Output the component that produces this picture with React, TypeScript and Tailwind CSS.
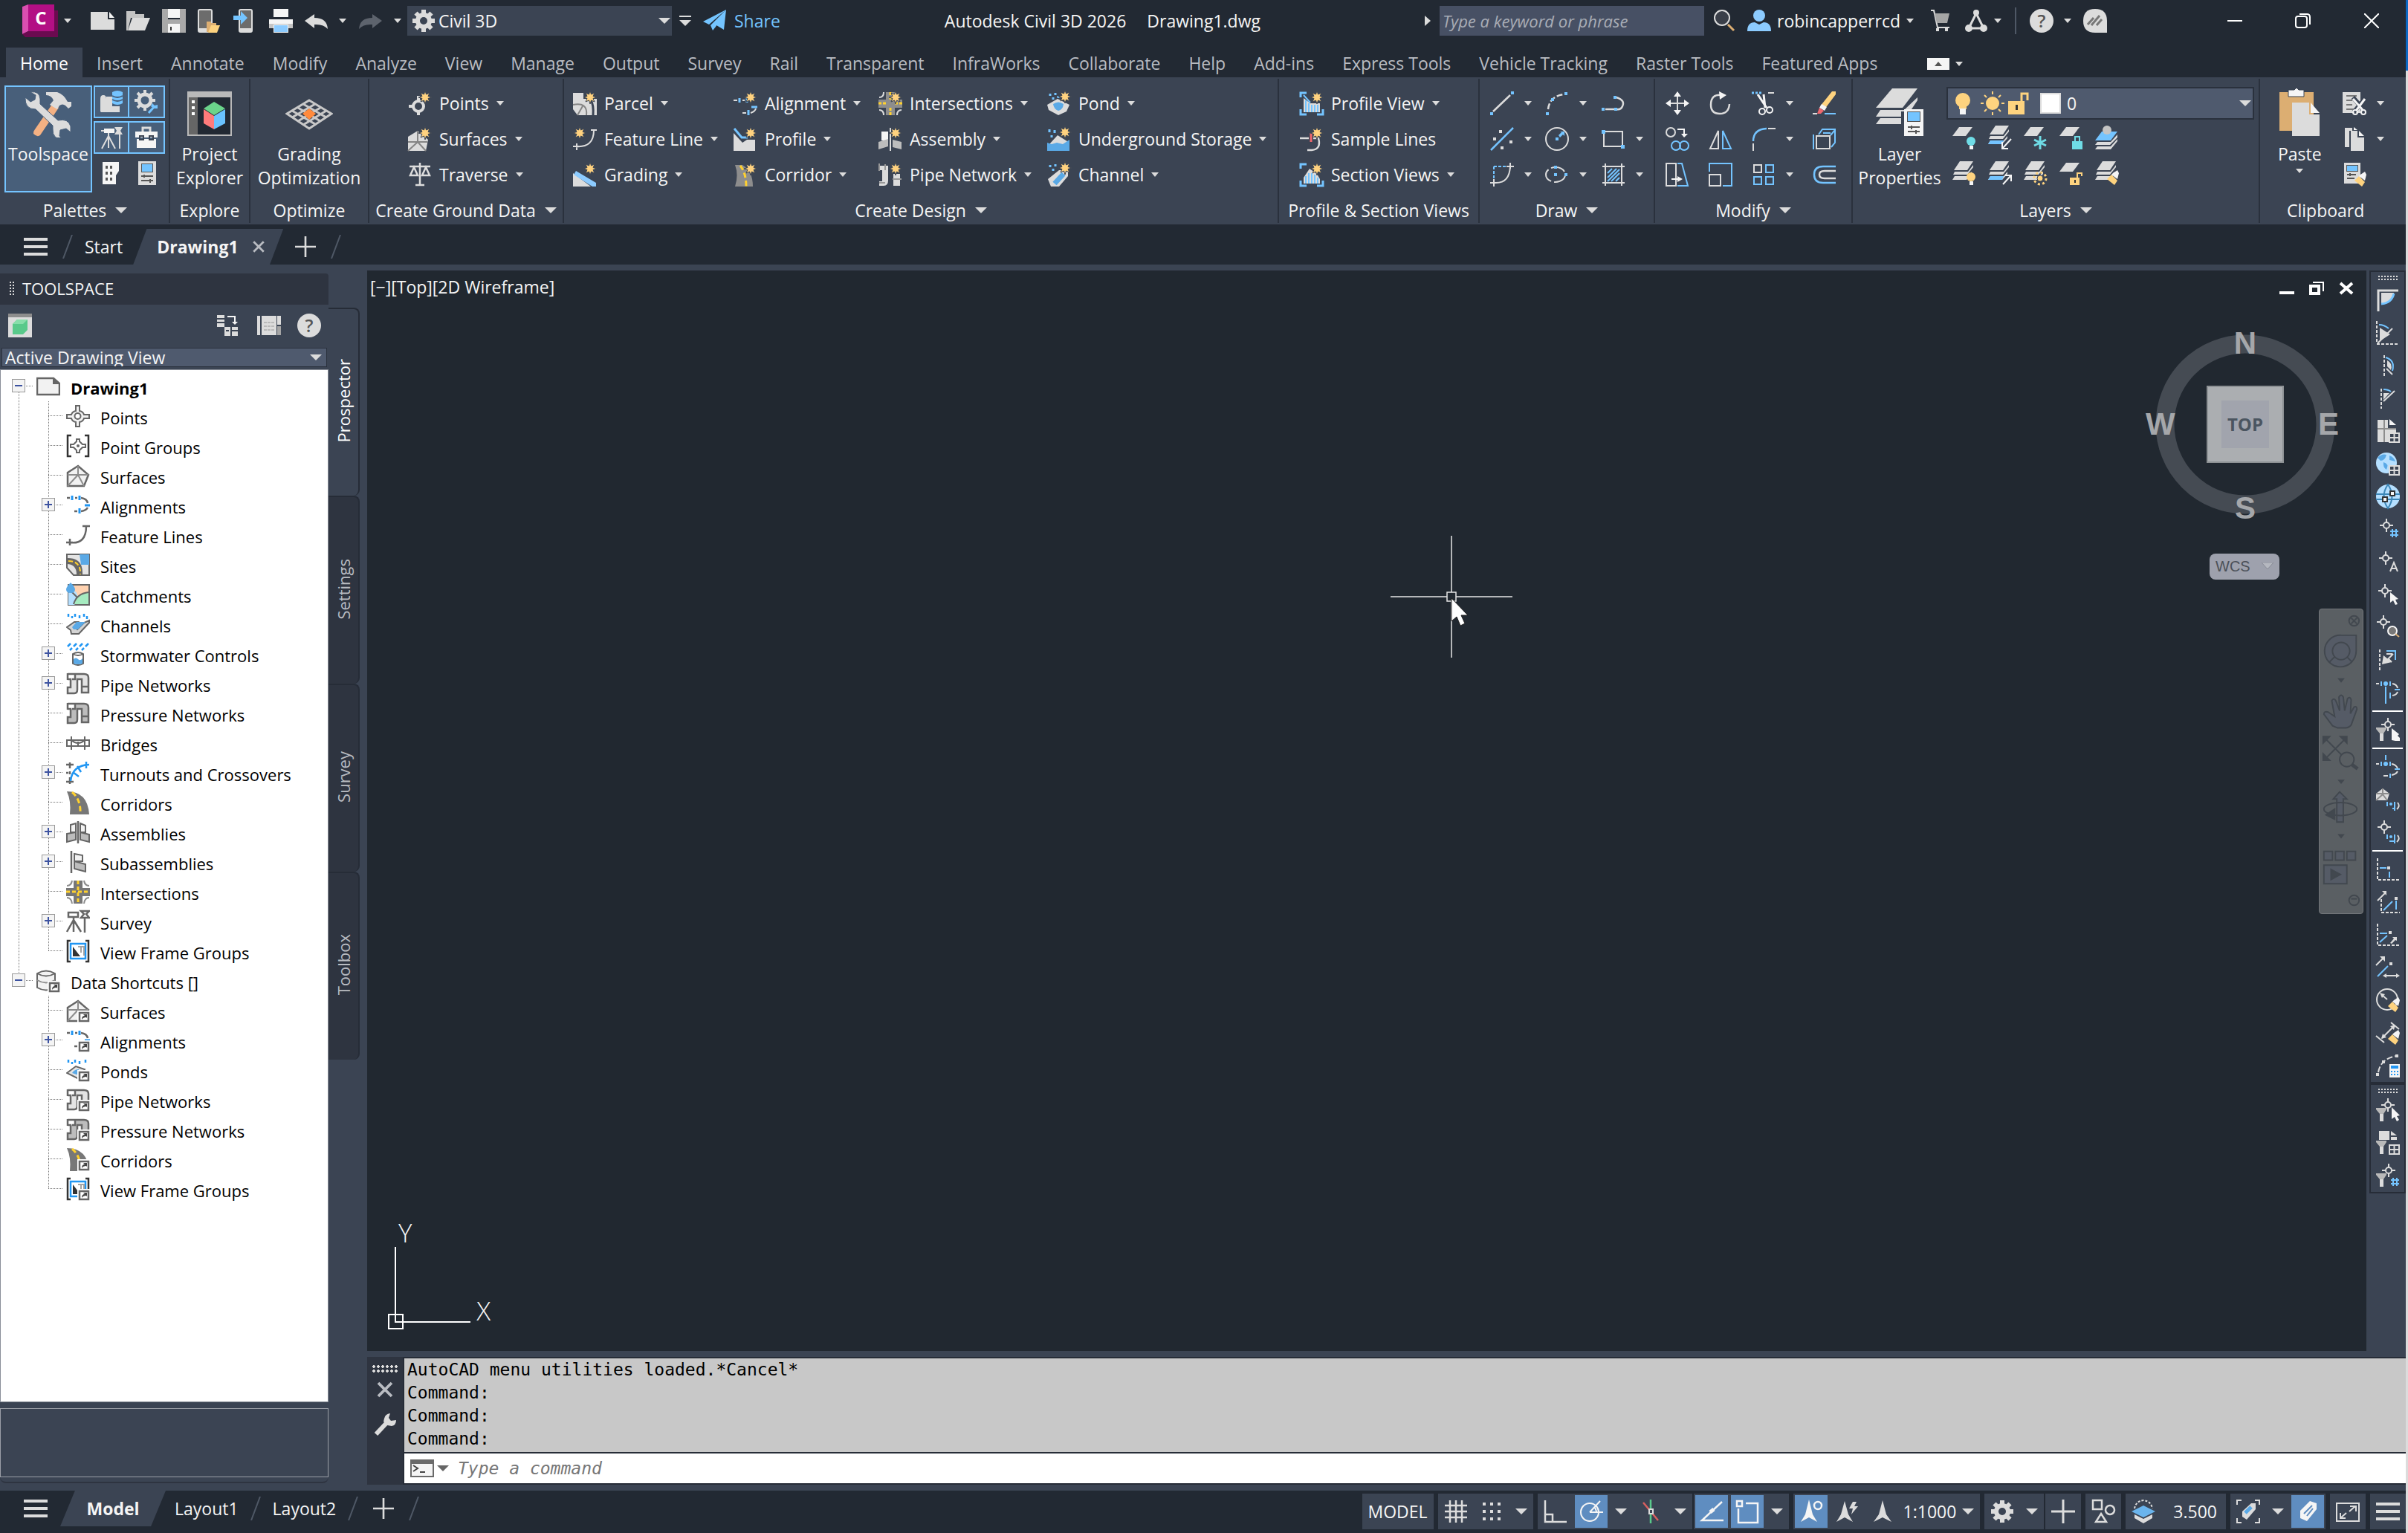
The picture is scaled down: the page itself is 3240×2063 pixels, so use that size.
import { ReactNode } from "react";
import clsx from "clsx";

const G = "#dcdcdc";
const W = "#f5f5f5";
const B = "#74c4ff";
const Y = "#fed37f";
const K = "#666666";
const BG = "#3b4453";

interface ShapeProps {
  d: string;
  c?: string;
  w?: number;
  f?: string;
  dash?: string;
}

const L = ({ d, c = G, w = 2, f = "none", dash }: ShapeProps) => (
  <path d={d} stroke={c} strokeWidth={w} fill={f} strokeDasharray={dash} />
);

const F = ({ d, c = G }: ShapeProps) => <path d={d} fill={c} />;

const Star = ({ x = 23, y = 8 }: { x?: number; y?: number }) => (
  <path
    transform={`translate(${x} ${y})`}
    d="M0-9 1.5-4 6-6 4-1.5 9 0 4 1.5 6 6 1.5 4 0 9-1.5 4-6 6-4 1.5-9 0-4-1.5-6-6-1.5-4z"
    fill="#ffd27f"
    stroke={BG}
    strokeWidth={1}
  />
);

const Sheets = ({ mid = G }: { mid?: string }) => (
  <>
    <F d="M10 0h18l-8 12H2z" />
    <F d="M3 14h18l7-9v3l-8 10H1z" c={mid} />
    <F d="M3 20h18l5-6v3l-7 8H0z" c={mid} />
  </>
);

const Target = ({ x, y, c = G }: { x: number; y: number; c?: string }) => (
  <g transform={`translate(${x} ${y})`}>
    <circle r={4} fill="none" stroke={c} strokeWidth={2} />
    <L d="M-9 0h5M4 0h5M0-9v5M0 4v5" c={c} />
  </g>
);

const Funnel = () => (
  <>
    <F d="M0 13h14v2l-4 6v10H5V21L0 15z" c="#b9b9b9" />
    <F d="M5 21h5v10H5z" />
  </>
);

const GridBadge = () => <L d="M18 19h13v12H18zM24.5 19v12M18 25h13" f={BG} />;

const Brush = () => (
  <>
    <F d="M22 18l8 8-4 6-10-8z" c={Y} />
    <F d="M24 16l6-4 2 4-2 8-8-6z" c={W} />
  </>
);

const Pipes = ({ c = "#e4e4e4" }: { c?: string }) => (
  <L
    d="M2 3h10M2 10h4v11H2v8h9q4 0 4-5V10h6v18h9V8q0-5-6-5H12v7H8M2 2v9M21 20h9"
    c={K}
    w={2.5}
    f={c}
  />
);

const Shortcut = () => (
  <>
    <rect x={15} y={16} width={17} height={16} fill="#fff" />
    <L d="M18 19h12v11H18z" c={K} w={2.5} f="#fff" />
    <F d="M21 28q0-5 4-5l-2-2h5v5l-1-1q-4 0-6 3z" c="#444" />
  </>
);

const ICONS: Record<string, ReactNode> = {
  new: (
    <>
      <F d="M0 4h23v10h9v14H0z" />
      <F d="M25 4l7 8h-7z" c={W} />
    </>
  ),
  open: (
    <>
      <F d="M0 3h12v4h12v5H6L2 29H0z" c="#c4c4c4" />
      <F d="M8 12h24l-7 17H2z" c={G} />
    </>
  ),
  save: (
    <>
      <F d="M0 0h8v14h16V0h8v32H0z" c="#a9a9a9" />
      <F d="M8 0h16v12H8zM8 20h16v12H8z" c={W} />
      <F d="M11 24h2v5h-2z" c="#333" />
    </>
  ),
  phoneOpen: (
    <>
      <rect x={1} y={1} width={18} height={30} rx={2} fill="#6c6c6c" stroke={G} strokeWidth={2} />
      <F d="M1 26h18v5H1z" />
      <F d="M12 17h6v2h7v12H12z" c="#dcae72" />
      <F d="M18 22h12l-4 10H14z" c={Y} />
    </>
  ),
  phoneSave: (
    <>
      <rect x={8} y={1} width={17} height={30} rx={2} fill="#6c6c6c" stroke={G} strokeWidth={2} />
      <F d="M8 26h17v5H8z" />
      <F d="M0 9h10V3l9 9-9 9v-6H0z" c={B} />
    </>
  ),
  print: (
    <>
      <F d="M6 0h20v11H6zM0 14h32v12H0z" c={W} />
      <F d="M0 20h32v6H0z" c="#c4c4c4" />
      <F d="M6 21h20v11H6z" c={W} />
      <F d="M7 22h18v9H7z" c="#8ccbff" />
    </>
  ),
  undo: <F d="M0 16 13 7v5q17 0 18 15-6-7-18-6v5z" />,
  redo: <F d="M32 16 19 7v5Q2 12 1 27q6-7 18-6v5z" c="#5d636d" />,
  gear: (
    <>
      <circle cx={16} cy={16} r={8} fill="none" stroke={G} strokeWidth={6} />
      <L d="M16 1v5M16 26v5M1 16h5M26 16h5M5.5 5.5l3.5 3.5M23 23l3.5 3.5M5.5 26.5 9 23M23 9l3.5-3.5" w={6} />
    </>
  ),
  share: <F d="M31 1 0 17l8 4zM31 1 10 22l3 7 4-5zM31 1 18 22l10 6z" c={B} />,
  search: (
    <>
      <circle cx={12} cy={12} r={10} fill="#3a3f49" stroke={G} strokeWidth={2} />
      <L d="M20 21l8 8" c="#dcae72" w={3} />
    </>
  ),
  person: (
    <>
      <circle cx={16} cy={9} r={8} fill="#8ccbff" />
      <F d="M0 30q0-12 10-12l6 3 6-3q10 0 10 12z" c="#8ccbff" />
    </>
  ),
  cart: (
    <>
      <L d="M3 2h4l5 23h16" />
      <F d="M8 6h20l-3 13H11z" c="#a5a5a5" />
      <F d="M10 26h4v4h-4zM22 26h4v4h-4z" />
    </>
  ),
  autodesk: (
    <>
      <L d="M16 6 6 26h20z" w={3} />
      <circle cx={16} cy={5} r={4} fill={G} />
      <circle cx={6} cy={26} r={5} fill={G} />
      <circle cx={26} cy={26} r={5} fill={G} />
    </>
  ),
  speak: (
    <>
      <F d="M16 0q16 0 16 16v16H16Q0 32 0 16T16 0z" />
      <L d="M6 21l8-9M11 22l11-13M18 22l7-8" c="#777" w={3} />
    </>
  ),
  files: (
    <>
      <F d="M1 29V12q0-5 4-5t4 5v10h18v8H2z" />
      <F d="M9 9h8v14H9z" c={G} />
      <F d="M17 3q7-4 14 0v15q-7 4-14 0z" c={B} />
      <L d="M17 8q7 4 14 0M17 13q7 4 14 0" c="#485f7a" />
    </>
  ),
  gearWrench: (
    <>
      <circle cx={14} cy={14} r={8} fill="none" stroke={G} strokeWidth={5} />
      <L d="M14 0v5M14 23v5M0 14h5M23 14h5M4 4l4 4M20 8l4-4M4 24l4-4" w={4} />
      <L d="M19 31l8-9" c={B} w={3} />
      <F d="M24 18l3 3 4-1v5h-5l-4-3z" c={B} />
    </>
  ),
  survey: (
    <>
      <F d="M6 4h14v6H6z" c={W} />
      <L d="M2 7h4M12 10v20M12 14 3 31M12 14l9 17M27 12v19" />
      <F d="M20 2h11l-3 5 3 5H20l3-5z" />
    </>
  ),
  toolbox: (
    <>
      <L d="M11 8V3h10v5" w={3} />
      <F d="M1 8h30v8H1zM3 18h26v12H3z" c={W} />
      <L d="M7 14h5v5H7zM20 14h5v5h-5z" c={BG} />
    </>
  ),
  panelDots: (
    <>
      <F d="M4 1h22v12l-4 6v12H4z" c={W} />
      <L d="M8 8h3M8 16h3M8 24h3M14 8h3M14 16h3M14 24h3" c="#555" w={4} />
    </>
  ),
  tablet: (
    <>
      <F d="M4 0h24v32H4z" />
      <F d="M8 3h16v12H8z" c="#555" />
      <F d="M9 4h14v10H9z" c={B} />
      <L d="M8 20h16M8 26h16M12 18v4M20 24v5" c="#555" />
    </>
  ),
  points: (
    <>
      <circle cx={14} cy={20} r={7} fill="none" stroke={G} strokeWidth={4} />
      <L d="M14 6v7M14 27v5M1 20h6" w={4} />
      <Star />
    </>
  ),
  surfaces: (
    <>
      <F d="M0 13 13 5l14 12-3 15H0z" />
      <L d="M13 5v15L0 32M0 20h26M13 20l11 12" c="#858585" />
      <Star />
    </>
  ),
  traverse: <L d="M16 0v30M2 5h28M8 6 3 17h10zM24 6l-5 11h10zM10 30h12" w={2.5} />,
  parcel: (
    <>
      <F d="M0 2h14v8h18v22H6L0 24z" />
      <L d="M0 18q20-4 18 14M6 32l8-14" c="#858585" />
      <L d="M24 12q4 6 3 20" c={BG} w={3} />
      <Star />
    </>
  ),
  featureLine: (
    <>
      <L d="M4 26q24 2 24-22M0 26h8M5 22v9M24 4h8" />
      <Star x={9} y={8} />
    </>
  ),
  grading: (
    <>
      <F d="M0 14v18h24z" />
      <F d="M4 11 31 27v5h-5L1 16z" c="#8ccbff" />
      <Star />
    </>
  ),
  alignment: (
    <>
      <L d="M0 12h5M12 12h3M20 12h4M12 29h5M23 29q6-2 7-6" />
      <L d="M8 9v6M18 9v6M20 25v7M24 21h8" c={B} w={3} />
      <Star />
    </>
  ),
  profile: (
    <>
      <L d="M1 2l10 12h8" c={B} w={3} />
      <F d="M0 8l12 13 6-4h11v15H0z" />
      <Star />
    </>
  ),
  corridor: (
    <>
      <F d="M2 3h10q14 8 14 29H2Q7 16 2 3z" c="#8d8d8d" />
      <L d="M9 4q8 10 8 28" c="#ffd12f" w={3} dash="7 4" />
      <Star />
    </>
  ),
  intersections: (
    <>
      <F d="M10 1h12v10h10v11H22v10H10V22H0V11h10z" c="#8d8d8d" />
      <L d="M16 1v10M16 22v10M0 16h10M22 16h10" c="#ffd12f" w={3} dash="4 2" />
      <L d="M1 8q6 0 6-7M1 25q6 0 6 7M31 25q-6 0-6 7" />
      <Star />
    </>
  ),
  assembly: (
    <>
      <F d="M4 6h9v12H4z" c={W} />
      <F d="M0 20l13-4v10L0 30zM19 17l12 3v10l-12-3z" c="#bdbdbd" />
      <L d="M16 1v31" />
      <Star />
    </>
  ),
  pipeNetwork: (
    <>
      <F d="M0 4h13v20q0 7-6 7H1v-6h4V10H0zM20 15h9v16h-9z" />
      <L d="M1 1v10M1 27h8M19 22h12M9 2v8" c="#999" />
      <Star />
    </>
  ),
  pond: (
    <>
      <L d="M4 3v3M11 2v3M8 8v3M15 6v3" c={B} w={3} />
      <F d="M0 18l14-8 16 8-4 9-11 5L2 25z" />
      <F d="M8 17q7-5 14 0-1 8-7 9-6-2-7-9z" c="#5aa9e6" />
      <Star x={24} y={7} />
    </>
  ),
  storage: (
    <>
      <L d="M3 3v4M10 4v4M6 11v3" c={B} w={3} />
      <F d="M2 24 14 11l16 10v11H0z" />
      <F d="M0 21l6 2 7-2 8 2 9-6v15H0z" c="#5aa9e6" />
      <Star x={24} y={7} />
    </>
  ),
  channel: (
    <>
      <L d="M4 3v3M11 2v3M8 8v3" c={B} w={3} />
      <F d="M1 22 16 10h12v8L16 32H5z" />
      <L d="M10 28 22 15" c="#5aa9e6" w={7} />
      <Star x={24} y={7} />
    </>
  ),
  profileView: (
    <>
      <L d="M9 2H1v6M1 24v7h8M23 31h8v-7" c={B} w={3} />
      <F d="M5 9l9 7h13v12H5z" />
      <L d="M5 5l9 10M8 12v16M12 16v12M16 18v10M20 18v10M24 18v10" c={B} />
      <Star />
    </>
  ),
  sampleLines: (
    <>
      <L d="M0 15h12M18 15h7q4 15-9 16h-6" w={2.5} />
      <L d="M15 8v12" c="#f0686e" w={3} />
      <Star />
    </>
  ),
  sectionViews: (
    <>
      <L d="M9 2H1v6M1 24v7h8M23 31h8v-7" c={B} w={3} />
      <F d="M5 20 13 8l10 7 4 7v6H5z" />
      <L d="M8 18v10M12 14v14M16 14v14M20 16v12M24 20v8" c={B} />
      <Star />
    </>
  ),
  line: (
    <>
      <L d="M4 27 27 5" w={2.5} />
      <F d="M0 28h4v4H0zM28 0h4v4h-4z" c={B} />
    </>
  ),
  arc: (
    <>
      <L d="M4 24Q6 6 26 4" w={2.5} dash="8 3" />
      <F d="M1 28h4v4H1zM8 9h4v4H8zM26 1h4v4h-4z" c={B} />
    </>
  ),
  polyline: (
    <>
      <L d="M5 24h14M20 8q12 4 8 12-2 5-8 4" w={2.5} />
      <F d="M0 22h4v4H0zM16 6h4v4h-4zM17 22h4v4h-4z" c={B} />
    </>
  ),
  xline: (
    <>
      <L d="M1 31 31 1" c={B} w={2.5} />
      <F d="M12 4h4v4h-4zM4 14h4v4H4zM26 18h4v4h-4zM14 26h4v4h-4z" />
    </>
  ),
  circle: (
    <>
      <circle cx={16} cy={16} r={15} fill="none" stroke={G} strokeWidth={2} />
      <F d="M14 14h4v4h-4zM18 11l4-4-2-1h6v6l-2-2-4 4z" c={B} />
    </>
  ),
  rect: (
    <>
      <L d="M3 6h25v20H3z" />
      <F d="M0 4h5v5H0zM26 24h5v5h-5z" c={B} />
    </>
  ),
  blend: (
    <>
      <L d="M5 5v20M5 5h18" c={B} dash="4 2" />
      <L d="M0 27h8q18 0 19-22M5 22v10M22 5h10M27 0v8" />
    </>
  ),
  ellipse: (
    <>
      <ellipse cx={14} cy={16} rx={13} ry={10} fill="none" stroke={G} strokeWidth={2} strokeDasharray="20 4" />
      <F d="M12 4h4v4h-4zM12 14h4v4h-4zM26 14h4v4h-4z" c={B} />
    </>
  ),
  hatch: (
    <>
      <L d="M1 5h30M1 27h30M5 1v30M27 1v30" />
      <L d="M8 14l6-6M8 20 20 8M8 25 24 9M13 25l11-11M19 25l5-5" c={B} />
    </>
  ),
  move: (
    <>
      <L d="M16 4v24M4 16h24" />
      <F d="M16 0l5 7H11zM16 32l5-7H11zM0 16l7-5v10zM32 16l-7-5v10z" c={W} />
    </>
  ),
  rotate: (
    <>
      <L d="M18 5Q3 3 3 18q0 12 12 12t13-13" w={2.5} />
      <F d="M14 0l10 5-9 6z" c={W} />
    </>
  ),
  trim: (
    <>
      <L d="M0 2h14" c={B} w={3} dash="3 2" />
      <L d="M22 2h8" />
      <L d="M8 4l12 18M16 4l2 18" c={W} w={3} />
      <circle cx={14} cy={27} r={4} fill="none" stroke={W} strokeWidth={2} />
      <circle cx={24} cy={25} r={4} fill="none" stroke={W} strokeWidth={2} />
    </>
  ),
  erase: (
    <>
      <F d="M26 0h5v4L16 24l-6-4z" c={Y} />
      <F d="M12 17l7 4-3 5-7-4z" c={W} />
      <F d="M9 22l6 4-4 4H6z" c="#f0686e" />
      <L d="M0 30h6" />
      <L d="M16 30h15" c={B} />
    </>
  ),
  copy: (
    <>
      <circle cx={7} cy={7} r={6} fill="none" stroke={G} strokeWidth={2} />
      <L d="M16 3h9v7" c={W} />
      <F d="M21 9h9l-5 5z" c={W} />
      <circle cx={14} cy={25} r={6} fill="none" stroke={B} strokeWidth={2} />
      <circle cx={25} cy={25} r={6} fill="none" stroke={B} strokeWidth={2} />
    </>
  ),
  mirror: (
    <>
      <L d="M13 5v24H2z" />
      <L d="M19 5v24h11z" c={B} />
    </>
  ),
  fillet: (
    <>
      <L d="M2 19Q2 3 20 2" c={B} w={2.5} />
      <L d="M22 2h10M2 22v10" />
    </>
  ),
  explode: (
    <>
      <L d="M5 12h18v17H5z" />
      <L d="M1 30V10M8 10l5-7h17v18l-5 6M30 4l-6 7M14 8h10" c={B} />
    </>
  ),
  stretch: (
    <>
      <L d="M1 1h13v30H1z" />
      <L d="M16 1h6l8 30H16" c={B} />
      <L d="M8 22h12" c={W} />
      <F d="M16 18l7 4-7 4z" c={W} />
    </>
  ),
  scale: (
    <>
      <L d="M1 12V1h30v30H19" c={B} />
      <L d="M1 16h15v15H1z" />
    </>
  ),
  array: (
    <>
      <L d="M3 3h10v10H3z" />
      <L d="M19 3h10v10H19zM3 19h10v10H3zM19 19h10v10H19z" c={B} />
    </>
  ),
  offset: (
    <>
      <L d="M31 5H14Q2 5 2 16t12 11h17" c={B} w={2.5} />
      <L d="M31 11H16q-7 0-7 5t7 5h15" w={2.5} />
    </>
  ),
  layOff: (
    <>
      <F d="M9 2h18l-9 12H0z" />
      <circle cx={25} cy={21} r={6} fill="#6fdce6" />
      <F d="M23 27h5v5h-5z" c={W} />
    </>
  ),
  layIso: (
    <>
      <Sheets />
      <F d="M3 20h18l-2 5H0z" c={B} />
      <L d="M31 18 20 30M19 22v9h8" c={W} />
    </>
  ),
  layFreeze: (
    <>
      <F d="M9 2h18l-9 12H0z" />
      <L d="M22 14v18M14 19l16 8M14 27l16-8" c="#6fdce6" w={3} />
    </>
  ),
  layLock: (
    <>
      <F d="M9 2h18l-9 12H0z" />
      <L d="M21 21v-6h6v6" c="#6fdce6" />
      <F d="M17 21h14v11H17z" c="#6fdce6" />
    </>
  ),
  layCurrent: (
    <>
      <F d="M3 22h18l9-10v4L20 26H0zM3 28h18l9-10v3l-9 11H0z" />
      <F d="M9 8h21l-9 12H0z" c={B} />
      <circle cx={16} cy={6} r={6} fill="#c4c4c4" />
    </>
  ),
  layOn: (
    <>
      <Sheets />
      <circle cx={25} cy={21} r={6} fill={Y} />
      <F d="M23 27h5v5h-5z" c={W} />
    </>
  ),
  layUniso: (
    <>
      <Sheets />
      <F d="M3 20h18l-2 5H0z" c={B} />
      <L d="M20 31 30 20M23 19h8v8" c={W} />
    </>
  ),
  layThaw: (
    <>
      <Sheets />
      <circle cx={22} cy={23} r={4} fill={Y} stroke={BG} strokeWidth={1} />
      <circle cx={22} cy={23} r={8} fill="none" stroke={Y} strokeWidth={3} strokeDasharray="3 3.3" />
    </>
  ),
  layUnlock: (
    <>
      <F d="M9 2h18l-9 12H0z" />
      <L d="M24 22v-6h6v4" c={Y} />
      <F d="M14 22h13v10H14z" c={Y} />
      <F d="M20 25h2v4h-2z" c="#333" />
    </>
  ),
  layMatch: (
    <>
      <Sheets />
      <Brush />
    </>
  ),
  bulb: (
    <>
      <circle cx={12} cy={12} r={10} fill={Y} />
      <F d="M7 20h10v4H7z" c={Y} />
      <F d="M8 23h8v8H8z" c={W} />
    </>
  ),
  sun: (
    <>
      <circle cx={16} cy={16} r={9} fill={Y} />
      <L d="M16 0v4M16 28v4M0 16h4M28 16h4M5 5l3 3M24 24l3 3M5 27l3-3M24 8l3-3" c={Y} />
    </>
  ),
  unlock: (
    <>
      <L d="M19 13V3h8v9" c={Y} w={3} />
      <F d="M1 13h22v18H1z" c={Y} />
      <F d="M11 18h3v7h-3z" c="#333" />
    </>
  ),
  cut: (
    <>
      <F d="M0 1h24v28H0z" />
      <L d="M5 6h14M5 12h8M5 18h8M5 24h10" c="#777" />
      <path d="M14 8l17 20M31 8 15 28" stroke={BG} strokeWidth={6} />
      <L d="M14 10l13 15M30 10 18 26" c={W} w={3} />
      <circle cx={17} cy={28} r={3} fill="none" stroke={W} strokeWidth={2} />
      <circle cx={28} cy={28} r={3} fill="none" stroke={W} strokeWidth={2} />
    </>
  ),
  copyClip: (
    <>
      <F d="M3 1h10v4H9v22H3z" />
      <F d="M11 5h9v9h9v18H11z" />
      <F d="M22 5l7 7h-7zM15 0l5 4h-5z" c={W} />
    </>
  ),
  pasteSpecial: (
    <>
      <F d="M2 0h22v28H2z" />
      <F d="M5 3h16v9H5z" c="#555" />
      <F d="M6 4h14v7H6z" c={B} />
      <L d="M6 16h12M6 21h10M10 14v4" c="#555" />
      <Brush />
    </>
  ),
  // toolspace header
  prospector: (
    <>
      <F d="M0 0h32v32H0z" />
      <F d="M0 0h32v5H0z" c="#8d8d8d" />
      <F d="M6 14l6-6h14v14l-6 6H6z" c="#59c98a" />
      <F d="M6 14l6-6h14l-6 6z" c="#88deaa" />
    </>
  ),
  treeSwap: (
    <>
      <F d="M0 2h10v16H0zM10 18h8v12h-8zM20 18h8v12h-8z" />
      <L d="M0 7h10M0 12h10M12 23h4M20 23h8" c={BG} />
      <L d="M14 4h10v8" c={W} />
      <F d="M20 11h8l-4 4z" c={W} />
    </>
  ),
  panorama: (
    <>
      <F d="M0 3h4v26H0zM6 3h20v26H6zM27 3h5v12h-5z" />
      <F d="M27 17h5v12h-5z" c="#a5a5a5" />
      <L d="M9 12h14M9 17h14M9 22h14" c="#b9b9b9" dash="4 1" />
    </>
  ),
  // prospector tree
  tDrawing: (
    <>
      <L d="M1 5h22l8 7v15H1z" c={K} w={2.5} f="#f2f2f2" />
      <F d="M22 4l10 9H22z" c={K} />
    </>
  ),
  tPoint: (
    <>
      <L d="M13 9V2h5v7q5 1 6 5h7v5h-7q-1 4-6 5v6h-5v-6q-5-1-6-5H1v-5h6q1-4 6-5z" c={K} f="#f2f2f2" />
      <circle cx={15.5} cy={16} r={4} fill="#fff" stroke={K} strokeWidth={2} />
    </>
  ),
  tPointGroup: (
    <>
      <L d="M7 2H2v28h5M25 2h5v28h-5" c="#333" w={2.5} />
      <L d="M14 10V7h4v3l4 4h4v4h-4l-4 4v3h-4v-3l-4-4H6v-4h4z" c={K} />
      <circle cx={16} cy={16} r={2} fill={K} />
    </>
  ),
  tSurface: (
    <>
      <L d="M2 12 16 3l14 12-6 15H2z" c={K} w={2.5} f="#f2f2f2" />
      <L d="M16 3v12L2 30M2 15h28M16 15l8 15" c="#8d8d8d" />
    </>
  ),
  tAlign: (
    <>
      <L d="M1 6h4M12 6h3M20 6q8 1 9 7M11 24h4M20 24q7-1 9-5" c={K} w={2.5} />
      <L d="M8 3v6M18 3v6M18 20v7M25 16h7" c="#2196f3" w={3} />
    </>
  ),
  tFeature: <L d="M5 26q22 3 22-22M0 26h9M5 21v9M22 4h10" c={K} w={2.5} />,
  tSites: (
    <>
      <L d="M1 2h30v28H10L1 20z" c={K} f="#e4e4e4" />
      <F d="M18 2h13v14H20z" c="#5aa9e6" />
      <F d="M2 7q21 0 20 22h-8q0-13-12-14z" c="#666" />
      <L d="M3 11q17 0 16 18" c="#ffd12f" dash="6 3" />
    </>
  ),
  tCatch: (
    <>
      <L d="M3 3h28v27H3z" c={K} f="#ffd2b0" />
      <F d="M3 12h10q6 9-2 18H3z" c="#b5dfff" />
      <F d="M10 29q4-14 20-16v16z" c="#a6ebc0" />
      <L d="M10 29q4-14 20-16M3 8l12 12" c={K} />
      <F d="M6 0q6 6 6 9 0 5-6 5T0 9q0-3 6-9z" c="#5aa9e6" />
    </>
  ),
  tChannel: (
    <>
      <L d="M3 2v4M8 5v3M12 2v4M18 4v4M24 2v4M28 5v4" c="#2196f3" w={2.5} />
      <L d="M1 20l10-7h5l-5 6 4 4 9-9 7-3v3L17 29H7l-1-5z" c={K} f="#d4d4d4" />
      <F d="M14 13h12l-10 10h-6l-2-3z" c="#5aa9e6" />
    </>
  ),
  tStorm: (
    <>
      <L d="M2 6l4-4M10 6l4-4M18 6l4-4M26 6l4-4M5 11l3-3M13 11l3-3M21 11l3-3" c="#2196f3" w={2.5} />
      <L d="M9 16v13q7 4 14 0V16q-7-4-14 0zM9 16q7 4 14 0" c={K} f="#fff" />
      <F d="M10 23q3-3 6 0t6-1v7q-6 2-12 0z" c="#5aa9e6" />
    </>
  ),
  tPipe: <Pipes />,
  tPressure: <Pipes c="#bdbdbd" />,
  tBridge: <L d="M0 12h32M0 20h32M7 7v18M25 7v18M7 12q9 8 18 0M1 12v8M16 14v6M31 12v8" c={K} />,
  tTurnout: (
    <>
      <L d="M5 2v8M0 5h10M0 28h10M5 14v4M0 16h3M5 22v9" c={K} w={2.5} />
      <L d="M6 27Q8 6 31 5M9 15l8 6M15 7l5 8M27 1v9" c="#2196f3" w={2.5} />
    </>
  ),
  tCorridor: (
    <>
      <F d="M1 1q28 0 30 31H5Q7 14 1 1z" c="#777" />
      <L d="M8 2q12 10 11 29" c="#ffd12f" w={3} dash="7 4" />
    </>
  ),
  tAssembly: (
    <>
      <L d="M6 6l7-2v12H6zM19 4l7 3v9h-7z" c={K} f="#f2f2f2" />
      <L d="M1 18l12-2v10L1 29zM19 16l12 3v10l-12-3z" c={K} f="#bdbdbd" />
      <L d="M16 1v30" c={K} w={2.5} />
    </>
  ),
  tSubassembly: (
    <>
      <L d="M11 5l11 2v8H11z" c={K} f="#f2f2f2" />
      <L d="M11 15l15 4v10l-15-4z" c={K} f="#bdbdbd" />
      <L d="M7 1v30" c={K} w={2.5} />
    </>
  ),
  tIntersection: (
    <>
      <F d="M10 1h12v10h10v11H22v10H10V22H0V11h10z" c="#777" />
      <L d="M16 1v31M0 16h32" c="#ffd12f" w={3} dash="5 3" />
      <L d="M1 8q6 0 7-7M31 8q-6 0-7-7M1 24q6 0 7 8M31 24q-6 0-7 8" c="#8d8d8d" />
    </>
  ),
  tSurvey: (
    <L d="M3 4h13v6H3zM20 2h11l-4 4 4 5H20l4-5zM10 10v20M10 14 1 30M10 14l10 16M25 11v20" c={K} w={2.5} />
  ),
  tFrame: (
    <>
      <L d="M6 2H2v28h4M26 2h4v28h-4" c="#333" w={2.5} />
      <L d="M6 6h20v20H6z" c="#2196f3" w={2.5} />
      <F d="M9 10l10 13H9z" c="#333" />
      <L d="M16 10h8v12M20 10v8" c="#a5a5a5" />
    </>
  ),
  tData: (
    <>
      <L d="M1 6v19q12 7 24 0V6Q13-1 1 6zM1 6q12 7 24 0" c={K} f="#f2f2f2" />
      <L d="M1 15q12 7 24 0" c="#8d8d8d" />
    </>
  ),
  tPond: (
    <>
      <L d="M3 2v4M8 5v3M12 2v4M18 4v4M26 2v4" c="#2196f3" w={2.5} />
      <L d="M1 20l12-9 12 4-6 14z" c={K} f="#e4e4e4" />
      <F d="M8 20q3-5 9-5v8z" c="#5aa9e6" />
    </>
  ),
  // right toolbar
  r1: (
    <>
      <F d="M7 6h17q-2 14-17 16z" />
      <L d="M3 31V3h27" w={3} />
      <L d="M7 21q14-1 17-14" c={B} w={3} />
    </>
  ),
  r2: (
    <>
      <F d="M5 9l14 9L5 27z" />
      <L d="M1 0v30M1 31h30" dash="4 2" />
      <L d="M2 30 22 10" />
      <L d="M4 5q7 0 13 5" c={B} />
    </>
  ),
  r3: (
    <>
      <L d="M11 2v28" dash="4 2" />
      <F d="M15 9q8 4 5 13l-5-5z" />
      <L d="M13 5q13 4 9 18" c={B} />
      <L d="M14 20l8 8" />
    </>
  ),
  r4: (
    <>
      <L d="M7 3v27" dash="4 2" />
      <F d="M10 9h8l-8 9z" />
      <L d="M10 4q6 0 10 3" c={B} />
      <L d="M10 20 25 6" />
    </>
  ),
  r5: (
    <>
      <F d="M2 1h14v12h11v8H17v10H2z" />
      <L d="M11 1v30M2 13h25" c="#8d8d8d" />
      <F d="M18 0l9 8h-9z" c={W} />
      <GridBadge />
    </>
  ),
  r6: (
    <>
      <circle cx={14} cy={15} r={14} fill="#b5dfff" />
      <F d="M2 8q6-6 12-4-2 8-8 8zM10 14q8 2 4 10-5-3-4-10zM18 5q6 2 8 8l-8-2z" c="#5aa9e6" />
      <GridBadge />
    </>
  ),
  r7: (
    <>
      <circle cx={16} cy={16} r={16} fill="#b5dfff" />
      <L d="M0 13h32M0 20h32M16 0q-11 16 0 32 11-16 0-32z" c="#3c87b8" />
      <L d="M19 9h6v6h-6zM9 17h6v6H9z" c="#333" f={W} />
    </>
  ),
  r8: (
    <>
      <Target x={14} y={11} />
      <L d="M22 16v11M27 16v11M19 19h11M19 24h11" c={B} />
    </>
  ),
  r9: (
    <>
      <Target x={13} y={11} />
      <L d="M19 29l5-12 5 12M21 25h7" />
    </>
  ),
  r10: (
    <>
      <Target x={12} y={11} />
      <F d="M19 13l11 9-4 1 3 6-3 1-3-6-4 3z" c={W} />
    </>
  ),
  r11: (
    <>
      <Target x={10} y={9} />
      <circle cx={22} cy={21} r={6} fill="#777" stroke={W} strokeWidth={2} />
      <L d="M26 25l5 4" c="#dcae72" />
    </>
  ),
  r12: (
    <>
      <L d="M5 2v28" dash="4 2" />
      <L d="M14 4h12v12" c={B} />
      <L d="M23 8 11 20M14 8h8M17 15l4 4" />
      <F d="M8 22l2-12 11 9z" />
    </>
  ),
  r13: (
    <>
      <L d="M0 4h4M22 4q6 1 7 6M22 20q6-1 7-5" />
      <circle cx={13} cy={4} r={3} fill={B} />
      <L d="M7 1v6M19 1v6M13 8v23M19 16v8M25 12h7" c={B} />
    </>
  ),
  r14: (
    <>
      <Target x={16} y={9} />
      <Funnel />
      <F d="M21 14l10 8-2 2 3 3v4h-6l-5-1z" c={W} />
    </>
  ),
  r15: (
    <>
      <L d="M0 12h4M21 12q6 1 8 6M10 28h6M21 27q6-1 8-5" />
      <circle cx={13} cy={12} r={3} fill={B} />
      <L d="M7 9v6M19 9v6M13 0v7M19 25v6M25 19h7" c={B} />
    </>
  ),
  r16: (
    <>
      <F d="M0 8l9-7 9 7-3 9H0z" />
      <L d="M9 1v8L0 17M9 9l6 8M0 8h18" c="#8d8d8d" />
      <L d="M15 19v6M25 19v12M22 28h4" c={B} />
      <circle cx={20} cy={22} r={2} fill={B} />
      <L d="M29 20q4 5-1 9" />
    </>
  ),
  r17: (
    <>
      <Target x={11} y={9} />
      <L d="M15 19v6M25 19v12M18 28h6" c={B} />
      <circle cx={20} cy={22} r={2} fill={B} />
      <L d="M29 20q4 5-1 9" />
    </>
  ),
  r18: (
    <>
      <L d="M2 1v29h30" dash="4 2" />
      <L d="M5 14h9M18 19v8" c={B} />
      <F d="M15 12h4v4h-4z" />
    </>
  ),
  r19: (
    <>
      <L d="M2 14 13 3" />
      <F d="M8 1h6v6z" />
      <L d="M7 12v18h25" dash="4 2" />
      <L d="M10 27 22 15M27 14v12" c={B} />
      <F d="M25 9h4v4h-4z" />
    </>
  ),
  r20: (
    <>
      <L d="M2 1v29h30" dash="4 2" />
      <L d="M5 14h10M5 26l10-9" c={B} />
      <F d="M17 11h4v4h-4zM19 27l5-6-2-2h6v5l-2-1-5 5z" />
    </>
  ),
  r21: (
    <>
      <L d="M0 13 10 3M11 27h19" />
      <F d="M5 1h7v7zM18 9h4v4h-4zM9 27l5-3v6zM32 27l-5-3v6z" />
      <L d="M2 28l14-14" c={B} />
    </>
  ),
  r22: (
    <>
      <circle cx={15} cy={15} r={14} fill="none" stroke={G} strokeWidth={2} />
      <L d="M15 15 8 9" />
      <F d="M5 6l7 2-4 5z" />
      <Brush />
    </>
  ),
  r23: (
    <>
      <L d="M8 23 24 7M0 20l11 9M20 2l11 9" />
      <F d="M7 24l2-7 5 5zM26 5l-7 2 5 5z" />
      <Brush />
    </>
  ),
  r24: (
    <>
      <L d="M3 25q3-18 24-22" dash="8 3" />
      <F d="M0 26h4v4H0zM8 9h4v4H8zM26 1h4v4h-4z" />
      <F d="M18 14h14v18H18z" c={W} />
      <L d="M20 18h10" c="#2196f3" w={4} />
      <L d="M20 24h10M20 28h10" c="#2196f3" dash="2 2" />
    </>
  ),
  r25: (
    <>
      <Target x={16} y={9} />
      <Funnel />
      <F d="M21 12l11 11-4 1 3 5-3 2-3-6-4 3z" c={W} />
    </>
  ),
  r26: (
    <>
      <F d="M4 0h14v12H4zM20 0l8 6h-8zM20 8h8v4h-8z" />
      <Funnel />
      <GridBadge />
    </>
  ),
  r27: (
    <>
      <Target x={17} y={9} />
      <Funnel />
      <L d="M23 19v11M28 19v11M20 22h11M20 27h11" c={B} />
    </>
  ),
  // status bar
  grid: <L d="M8 1v30M16 1v30M24 1v30M1 8h30M1 16h30M1 24h30" w={2.5} />,
  snap: <L d="M4 6h24M4 16h24M4 26h24" w={4} dash="4 6" />,
  ortho: <L d="M2 1v29h29M2 20h10v10" w={2.5} />,
  polar: (
    <>
      <circle cx={14} cy={17} r={12} fill="none" stroke={W} strokeWidth={2} />
      <L d="M14 17h18M14 17 28 2M23 17q0-4-3-7" c={W} />
    </>
  ),
  iso: (
    <>
      <L d="M6 4l20 24" c="#d9605f" w={2.5} />
      <L d="M16 0v32" c="#59c98a" w={2.5} />
      <L d="M14 13h5v6h-5z" f={BG} />
    </>
  ),
  otrack: (
    <>
      <L d="M30 3 3 28h29" c={W} w={2.5} />
      <L d="M14 17l5-4" c={W} w={5} />
    </>
  ),
  osnap: (
    <>
      <L d="M14 5h16v26H4V12" c={W} w={2.5} />
      <L d="M2 2h7v7H2z" c={W} w={2.5} />
    </>
  ),
  annoVis: (
    <>
      <F d="M13 0l5 20 6 10-11-6L2 30l6-10z" c={W} />
      <circle cx={25} cy={8} r={5} fill="none" stroke={W} strokeWidth={2.5} />
    </>
  ),
  annoAuto: (
    <>
      <F d="M13 2l5 18 6 10-11-6L2 30l6-10z" />
      <F d="M24 3l-5 9h5l-2 8 9-11h-5l3-6z" />
    </>
  ),
  anno: <F d="M16 1l5 19 7 10-12-6-12 6 7-10z" />,
  plus: <L d="M16 0v32M0 16h32" w={3} />,
  isolate: (
    <>
      <L d="M2 1h12v12H2zM13 19l7 11H6z" w={2.5} />
      <circle cx={25} cy={14} r={6} fill="none" stroke={G} strokeWidth={2.5} />
    </>
  ),
  stack: (
    <>
      <path d="M4 12Q6 2 16 1q10 1 12 11" stroke={G} strokeWidth={2} fill="none" strokeDasharray="3 2" />
      <F d="M4 20l12 6 12-6v5l-12 7-12-7z" />
      <F d="M16 8l16 8-16 8-16-8z" c="#6ab4ec" />
    </>
  ),
  tagFrame: (
    <>
      <L d="M7 1H1v6M25 1h6v6M1 25v6h6M31 25v6h-6" />
      <F d="M8 16 20 5h6v8L14 27l-6-4z" />
      <L d="M12 18l8-8" c="#5aa9e6" w={5} />
    </>
  ),
  tag: (
    <>
      <F d="M6 15 19 2l9 3v8L15 29l-9-4z" c={W} />
      <L d="M11 19 22 8M15 22l8-10" c="#5f8dc0" />
    </>
  ),
  fullscreen: (
    <>
      <L d="M1 5h30v24H1z" />
      <L d="M18 16l8-7M19 9h8v7M14 18l-8 7M6 18v7h7" />
    </>
  ),
  burger: <F d="M0 4h32v4H0zM0 14h32v4H0zM0 24h32v4H0z" />,
  close: <L d="M4 4l24 24M28 4 4 28" w={5} c="#b9bcc2" />,
  wrench: (
    <>
      <L d="M4 28 18 13" w={6} />
      <F d="M15 7q1-6 8-7l-2 6 3 4 7-1q0 7-6 8l-6-1-5-5z" />
    </>
  ),
};

interface IconProps {
  name: string;
  size?: string;
}

const Icon = ({ name, size = "size-8" }: IconProps) => (
  <svg viewBox="0 0 32 32" className={clsx(size, "shrink-0 overflow-visible")} aria-hidden="true">
    {ICONS[name]}
  </svg>
);

const Caret = ({ big = false }: { big?: boolean }) => (
  <svg
    viewBox="0 0 10 6"
    preserveAspectRatio="none"
    className={clsx("shrink-0", big ? "h-2 w-4" : "h-1.5 w-2.5")}
    aria-hidden="true"
  >
    <path d="M0 0h10L5 6z" fill={G} />
  </svg>
);

const IconButton = ({ name, label, size, className }: IconProps & { label: string; className?: string }) => (
  <button type="button" aria-label={label} className={clsx("flex shrink-0 items-center justify-center", className)}>
    <Icon name={name} size={size} />
  </button>
);

const Slash = () => (
  <svg viewBox="0 0 14 32" className="h-8 w-3.5 shrink-0" aria-hidden="true">
    <path d="M1 32 13 0" stroke="#4f5866" strokeWidth={2} />
  </svg>
);

const TitleBar = () => (
  <header className="flex h-16 shrink-0 items-start bg-[#222933]">
    <div className="flex h-14 items-center pl-[30px]">
      <button type="button" aria-label="Application menu" className="flex items-center gap-2">
        <span className="relative flex h-11 w-12">
          <svg viewBox="0 0 48 44" className="absolute inset-0" aria-hidden="true">
            <path d="M8 0h35v36H8z" fill="#b30f84" />
            <path d="M8 0v36l-8 4V3z" fill="#d94fb0" />
            <path d="M0 40l8-4h35V8h5v36H4z" fill="#6b0a50" />
          </svg>
          <span className="relative w-full pl-0.5 text-center text-2xl leading-9 font-bold text-white">C</span>
        </span>
        <Caret />
      </button>
      <div className="ml-[26px] flex items-center gap-4">
        <IconButton name="new" label="New" />
        <IconButton name="open" label="Open" />
        <IconButton name="save" label="Save" />
        <IconButton name="phoneOpen" label="Open from web and mobile" />
        <IconButton name="phoneSave" label="Save to web and mobile" />
        <IconButton name="print" label="Plot" />
        <IconButton name="undo" label="Undo" />
      </div>
      <div className="ml-3.5 flex items-center gap-4">
        <Caret />
        <IconButton name="redo" label="Redo" />
        <Caret />
      </div>
      <label className="ml-2 flex h-10 w-[356px] items-center bg-[#3b4453] pr-0.5 pl-1.5">
        <Icon name="gear" />
        <select
          aria-label="Workspace"
          className="ml-1 min-w-0 flex-1 appearance-none bg-transparent text-[#f5f5f5] outline-none"
        >
          <option>Civil 3D</option>
        </select>
        <Caret big />
      </label>
      <span className="ml-2.5 flex flex-col items-center gap-1">
        <span className="h-0.5 w-4 bg-[#dcdcdc]" />
        <Caret big />
      </span>
      <a href="#share" className="ml-4 flex items-center gap-2.5 text-[#74c4ff]">
        <Icon name="share" />
        Share
      </a>
    </div>
    <h1 className="flex h-14 flex-1 items-center justify-center gap-7 text-[#f5f5f5]">
      <span>Autodesk Civil 3D 2026</span>
      <span>Drawing1.dwg</span>
    </h1>
    <div className="flex h-14 items-center">
      <svg viewBox="0 0 8 14" className="mr-3 h-3.5 w-2" aria-hidden="true">
        <path d="M0 0l8 7-8 7z" fill={G} />
      </svg>
      <input
        type="search"
        aria-label="Search"
        placeholder="Type a keyword or phrase"
        className="h-10 w-[356px] bg-[#475064] px-1 text-[22px] italic outline-none placeholder:text-[#a9adb6]"
      />
      <IconButton name="search" label="Search" className="ml-3" />
      <button type="button" className="ml-3.5 flex items-center gap-2 text-[#f5f5f5]">
        <Icon name="person" />
        robincapperrcd
        <Caret />
      </button>
      <IconButton name="cart" label="App store" className="ml-5" />
      <IconButton name="autodesk" label="Autodesk" className="mr-2 ml-4" />
      <Caret />
      <span className="mx-[18px] h-9 w-0.5 bg-[#4f5866]" />
      <button
        type="button"
        aria-label="Help"
        className="mr-3.5 size-8 rounded-full bg-[#dcdcdc] text-2xl leading-8 font-semibold text-[#555]"
      >
        ?
      </button>
      <Caret />
      <IconButton name="speak" label="Feedback" className="mr-[126px] ml-4" />
    </div>
    <div className="flex h-14">
      <button type="button" aria-label="Minimize" className="flex w-[92px] items-center justify-center">
        <span className="h-0.5 w-5 bg-white" />
      </button>
      <button type="button" aria-label="Restore" className="flex w-[92px] items-center justify-center">
        <svg viewBox="0 0 22 22" className="size-[22px]" aria-hidden="true">
          <rect x="1" y="5" width="15" height="15" rx="3" fill="none" stroke="#fff" strokeWidth="2" />
          <path d="M6 2h10q4 0 4 4v10" fill="none" stroke="#fff" strokeWidth="2" />
        </svg>
      </button>
      <button type="button" aria-label="Close" className="flex w-[92px] items-center justify-center">
        <svg viewBox="0 0 20 20" className="size-5" aria-hidden="true">
          <path d="M0 0l20 20M20 0 0 20" stroke="#fff" strokeWidth="2" />
        </svg>
      </button>
    </div>
  </header>
);

const TABS = [
  "Home", "Insert", "Annotate", "Modify", "Analyze", "View", "Manage", "Output", "Survey", "Rail",
  "Transparent", "InfraWorks", "Collaborate", "Help", "Add-ins", "Express Tools", "Vehicle Tracking",
  "Raster Tools", "Featured Apps",
];

const RibbonTabs = () => (
  <nav className="flex h-10 shrink-0 items-stretch bg-[#222933] pl-2">
    {TABS.map((tab, i) => (
      <button
        key={tab}
        type="button"
        className={clsx("px-[19px] pt-0.5 whitespace-nowrap", i === 0 ? "bg-[#3b4453] text-white" : "text-[#b9bcc2]")}
      >
        {tab}
      </button>
    ))}
    <button type="button" aria-label="Minimize ribbon" className="ml-12 flex items-center gap-2 pt-1">
      <span className="flex h-4 w-[30px] items-center justify-center bg-[#f5f5f5]">
        <svg viewBox="0 0 10 6" className="h-1.5 w-2.5" aria-hidden="true">
          <path d="M0 6h10L5 0z" fill="#555" />
        </svg>
      </span>
      <Caret />
    </button>
  </nav>
);

interface PanelProps {
  title: string;
  caret?: boolean;
  className: string;
  children: ReactNode;
}

const Panel = ({ title, caret = false, className, children }: PanelProps) => (
  <section className={clsx("my-0.5 flex flex-col border-r-2 border-[#2a313d]", className)}>
    <div className="flex h-[160px] pt-[9px]">{children}</div>
    <button type="button" className="flex h-[34px] items-center justify-center gap-3 whitespace-nowrap">
      {title}
      {caret && <Caret big />}
    </button>
  </section>
);

interface Tool {
  icon: string;
  label: string;
  caret?: boolean;
}

const ToolColumn = ({ tools }: { tools: Tool[] }) => (
  <div className="flex flex-col">
    {tools.map(({ icon, label, caret = true }) => (
      <button key={label} type="button" className="flex h-12 items-center gap-2.5 whitespace-nowrap">
        <Icon name={icon} />
        {label}
        {caret && <Caret />}
      </button>
    ))}
  </div>
);

const SmallTools = ({ tools }: { tools: Tool[] }) => (
  <div className="flex flex-col">
    {tools.map(({ icon, label, caret = true }) => (
      <button key={label} type="button" aria-label={label} className="flex h-12 items-center gap-3.5">
        <Icon name={icon} />
        {caret && <Caret />}
      </button>
    ))}
  </div>
);

const BigLabel = ({ lines }: { lines: string[] }) => (
  <span className="flex flex-col items-center leading-8">
    {lines.map((line) => (
      <span key={line}>{line}</span>
    ))}
  </span>
);

const LAYER_TOOLS = [
  ["layOff", "layIso", "layFreeze", "layLock", "layCurrent"],
  ["layOn", "layUniso", "layThaw", "layUnlock", "layMatch"],
];

const Ribbon = () => (
  <div className="flex h-[198px] shrink-0 bg-[#3b4453] pl-0.5 text-[#f5f5f5]">
    <Panel title="Palettes" caret className="w-[227px]">
      <button
        type="button"
        className="ml-1 flex h-36 w-[118px] flex-col items-center gap-1.5 border-2 border-[#74c4ff] bg-[#485f7a] pt-1"
      >
        <svg viewBox="0 0 64 64" className="size-16" aria-hidden="true">
          <path d="M38 18l8 6-25 37q-4 3-9-2 0-4 2-6z" fill="#f4b183" />
          <path d="M29 3h15q9 3 14 13h5v6l-4 3-4-4q-4-3-8 0l-3 5-10-6 5-6q-3-7-10-7z" fill={G} />
          <path
            d="M8 3q12-2 13 9v7l24 22q14-3 17 8v8l-6-5-8 2-1 8 6 5q-16 0-15-15v-4L15 26Q0 26 1 10l7 6 6-3 1-6z"
            fill={G}
            stroke="#485f7a"
          />
        </svg>
        <BigLabel lines={["Toolspace"]} />
      </button>
      <div className="ml-0.5 flex w-[96px] flex-col gap-1">
        <div className="grid h-11 grid-cols-2 divide-x-2 divide-[#74c4ff] border-2 border-[#74c4ff] bg-[#485f7a]">
          <IconButton name="files" label="Prospector" />
          <IconButton name="gearWrench" label="Settings" />
        </div>
        <div className="grid h-11 grid-cols-2 divide-x-2 divide-[#74c4ff] border-2 border-[#74c4ff] bg-[#485f7a]">
          <IconButton name="survey" label="Survey" />
          <IconButton name="toolbox" label="Toolbox" />
        </div>
        <div className="grid h-11 grid-cols-2">
          <IconButton name="panelDots" label="Panorama" />
          <IconButton name="tablet" label="Properties" />
        </div>
      </div>
    </Panel>
    <Panel title="Explore" className="w-[108px]">
      <button type="button" className="flex w-full flex-col items-center gap-2 pt-2">
        <svg viewBox="0 0 60 60" className="size-[60px] shrink-0" aria-hidden="true">
          <path d="M1 1h58v58H1z" fill="#222933" stroke="#b9b9b9" strokeWidth="2" />
          <path d="M0 0h60v8H0z" fill="#b9b9b9" />
          <path d="M2 8h12v50H2z" fill="#666" />
          <path d="M6 12h4v4H6zM6 20h4v4H6zM6 28h4v4H6z" fill="#fff" />
          <path d="M36 14l15 9-15 9-14-9z" fill="#6bd48b" />
          <path d="M22 24l14 9v18l-14-8z" fill="#ff7b7b" />
          <path d="M51 24l-15 9v18l15-8z" fill="#6ac3ff" />
        </svg>
        <BigLabel lines={["Project", "Explorer"]} />
      </button>
    </Panel>
    <Panel title="Optimize" className="w-[160px]">
      <button type="button" className="flex w-full flex-col items-center gap-2 pt-2">
        <svg viewBox="0 0 64 60" className="h-[60px] w-16 shrink-0" aria-hidden="true">
          <path
            d="M32 12 62 30 32 50 2 30zM24 17l31 18M17 22l30 18M9 26l31 18M40 17 9 35M47 22 17 40M55 26 24 45"
            fill="none"
            stroke="#c8c8c8"
            strokeWidth="3"
          />
          <path d="M32 23l9 7-9 8-9-8z" fill="#ff8a3c" />
        </svg>
        <BigLabel lines={["Grading", "Optimization"]} />
      </button>
    </Panel>
    <Panel title="Create Ground Data" caret className="w-[262px] [&>div]:pl-[52px]">
      <ToolColumn
        tools={[
          { icon: "points", label: "Points" },
          { icon: "surfaces", label: "Surfaces" },
          { icon: "traverse", label: "Traverse" },
        ]}
      />
    </Panel>
    <Panel title="Create Design" caret className="w-[962px]">
      <div className="grid grid-cols-[216px_195px_227px_auto] pl-3">
        <ToolColumn
          tools={[
            { icon: "parcel", label: "Parcel" },
            { icon: "featureLine", label: "Feature Line" },
            { icon: "grading", label: "Grading" },
          ]}
        />
        <ToolColumn
          tools={[
            { icon: "alignment", label: "Alignment" },
            { icon: "profile", label: "Profile" },
            { icon: "corridor", label: "Corridor" },
          ]}
        />
        <ToolColumn
          tools={[
            { icon: "intersections", label: "Intersections" },
            { icon: "assembly", label: "Assembly" },
            { icon: "pipeNetwork", label: "Pipe Network" },
          ]}
        />
        <ToolColumn
          tools={[
            { icon: "pond", label: "Pond" },
            { icon: "storage", label: "Underground Storage" },
            { icon: "channel", label: "Channel" },
          ]}
        />
      </div>
    </Panel>
    <Panel title="Profile & Section Views" className="w-[270px] [&>div]:pl-7">
      <ToolColumn
        tools={[
          { icon: "profileView", label: "Profile View" },
          { icon: "sampleLines", label: "Sample Lines", caret: false },
          { icon: "sectionViews", label: "Section Views" },
        ]}
      />
    </Panel>
    <Panel title="Draw" caret className="w-[236px]">
      <div className="grid grid-cols-[74px_76px_auto] pl-3.5">
        <SmallTools
          tools={[
            { icon: "line", label: "Line" },
            { icon: "xline", label: "Construction line" },
            { icon: "blend", label: "Curve" },
          ]}
        />
        <SmallTools
          tools={[
            { icon: "arc", label: "Arc" },
            { icon: "circle", label: "Circle" },
            { icon: "ellipse", label: "Ellipse" },
          ]}
        />
        <SmallTools
          tools={[
            { icon: "polyline", label: "Polyline", caret: false },
            { icon: "rect", label: "Rectangle" },
            { icon: "hatch", label: "Hatch" },
          ]}
        />
      </div>
    </Panel>
    <Panel title="Modify" caret className="w-[266px]">
      <div className="grid grid-cols-[58px_58px_82px_auto] pl-3.5">
        <SmallTools
          tools={[
            { icon: "move", label: "Move", caret: false },
            { icon: "copy", label: "Copy", caret: false },
            { icon: "stretch", label: "Stretch", caret: false },
          ]}
        />
        <SmallTools
          tools={[
            { icon: "rotate", label: "Rotate", caret: false },
            { icon: "mirror", label: "Mirror", caret: false },
            { icon: "scale", label: "Scale", caret: false },
          ]}
        />
        <SmallTools
          tools={[
            { icon: "trim", label: "Trim" },
            { icon: "fillet", label: "Fillet" },
            { icon: "array", label: "Array" },
          ]}
        />
        <SmallTools
          tools={[
            { icon: "erase", label: "Erase", caret: false },
            { icon: "explode", label: "Explode", caret: false },
            { icon: "offset", label: "Offset", caret: false },
          ]}
        />
      </div>
    </Panel>
    <Panel title="Layers" caret className="w-[548px]">
      <button type="button" className="flex w-[126px] flex-col items-center gap-2 pt-1">
        <svg viewBox="0 0 64 64" className="size-16 shrink-0" aria-hidden="true">
          <path d="M22 0h34L36 26H0z" fill={G} />
          <path d="M6 29h32l18-17v4L48 28v3H34v7H0zM6 40h28v8H0z" fill={G} />
          <path d="M38 28h26v36H38z" fill={W} />
          <path d="M42 31h18v14H42z" fill="#555" />
          <path d="M43 32h16v12H43z" fill={B} />
          <path d="M43 52h16M43 58h16M48 50v5M54 56v5" stroke="#555" strokeWidth="2" />
        </svg>
        <BigLabel lines={["Layer", "Properties"]} />
      </button>
      <div className="mr-1.5 flex flex-1 flex-col pt-0.5">
        <label className="flex h-11 items-center gap-1 border-2 border-[#2a313d] bg-[#4f5a6e] pr-0.5 pl-2">
          <Icon name="bulb" />
          <Icon name="sun" />
          <Icon name="unlock" />
          <span className="ml-2 h-7 w-7 shrink-0 border-2 border-[#dcdcdc] bg-white" />
          <select aria-label="Layer" className="ml-1 min-w-0 flex-1 appearance-none bg-transparent outline-none">
            <option>0</option>
          </select>
          <Caret big />
        </label>
        {LAYER_TOOLS.map((row) => (
          <div key={row[0]} className="flex h-12 items-center gap-4 pl-2">
            {row.map((name) => (
              <IconButton key={name} name={name} label={name} />
            ))}
          </div>
        ))}
      </div>
    </Panel>
    <section className="my-0.5 flex flex-1 flex-col">
      <div className="flex h-[160px] gap-7 pt-[9px] pl-6">
        <button type="button" className="flex flex-col items-center gap-2 pt-1">
          <svg viewBox="0 0 54 64" className="h-16 w-[54px] shrink-0" aria-hidden="true">
            <path d="M0 5h46v52H0z" fill="#dcae72" />
            <path d="M12 2h8l3-3 3 3h7v9H12z" fill={W} stroke={BG} />
            <path d="M17 19h23v16h14v29H17z" fill={G} />
            <path d="M42 19l12 14H42z" fill={W} />
          </svg>
          <span className="flex flex-col items-center gap-1 leading-8">
            Paste
            <Caret />
          </span>
        </button>
        <SmallTools
          tools={[
            { icon: "cut", label: "Cut" },
            { icon: "copyClip", label: "Copy clip" },
            { icon: "pasteSpecial", label: "Match properties", caret: false },
          ]}
        />
      </div>
      <h2 className="flex h-[34px] items-center pl-9">Clipboard</h2>
    </section>
  </div>
);

const FileTabs = () => (
  <nav className="flex h-[54px] shrink-0 items-end bg-[#222933] text-[#f5f5f5]">
    <div className="flex h-12 items-center">
      <IconButton name="burger" label="File tab menu" className="ml-8" />
      <span className="ml-5">
        <Slash />
      </span>
      <button type="button" className="ml-4">Start</button>
    </div>
    <div className="ml-3.5 flex h-12 w-[202px] items-center gap-[18px] bg-[#3b4453] pl-8 font-bold [clip-path:polygon(9%_0,100%_0,91%_100%,0_100%)]">
      <button type="button">Drawing1</button>
      <IconButton name="close" label="Close Drawing1" size="size-[18px]" />
    </div>
    <div className="flex h-12 items-center">
      <IconButton name="plus" label="New drawing" size="size-7" className="ml-4" />
      <span className="ml-5">
        <Slash />
      </span>
    </div>
  </nav>
);

interface TreeRow {
  icon: string;
  label: string;
  open?: boolean;
  shortcut?: boolean;
}

const DRAWING_ROWS: TreeRow[] = [
  { icon: "tPoint", label: "Points" },
  { icon: "tPointGroup", label: "Point Groups" },
  { icon: "tSurface", label: "Surfaces" },
  { icon: "tAlign", label: "Alignments", open: false },
  { icon: "tFeature", label: "Feature Lines" },
  { icon: "tSites", label: "Sites" },
  { icon: "tCatch", label: "Catchments" },
  { icon: "tChannel", label: "Channels" },
  { icon: "tStorm", label: "Stormwater Controls", open: false },
  { icon: "tPipe", label: "Pipe Networks", open: false },
  { icon: "tPressure", label: "Pressure Networks" },
  { icon: "tBridge", label: "Bridges" },
  { icon: "tTurnout", label: "Turnouts and Crossovers", open: false },
  { icon: "tCorridor", label: "Corridors" },
  { icon: "tAssembly", label: "Assemblies", open: false },
  { icon: "tSubassembly", label: "Subassemblies", open: false },
  { icon: "tIntersection", label: "Intersections" },
  { icon: "tSurvey", label: "Survey", open: false },
  { icon: "tFrame", label: "View Frame Groups" },
];

const SHORTCUT_ROWS: TreeRow[] = [
  { icon: "tSurface", label: "Surfaces", shortcut: true },
  { icon: "tAlign", label: "Alignments", open: false, shortcut: true },
  { icon: "tPond", label: "Ponds", shortcut: true },
  { icon: "tPipe", label: "Pipe Networks", shortcut: true },
  { icon: "tPressure", label: "Pressure Networks", shortcut: true },
  { icon: "tCorridor", label: "Corridors", shortcut: true },
  { icon: "tFrame", label: "View Frame Groups", shortcut: true },
];

// dotted branch lines of one tree level, with the +/- box on top
const Branch = ({ lines, open }: { lines: string; open?: boolean }) => (
  <svg viewBox="0 0 40 40" className="size-10 shrink-0" aria-hidden="true">
    <path d={lines} stroke="#777" strokeWidth={1} strokeDasharray="1 1" />
    {open !== undefined && (
      <>
        <rect x={11.5} y={10.5} width={17} height={17} fill="#f4f4f4" stroke="#999" />
        <path d={open ? "M15 19h10" : "M15 19h10M20 14v10"} stroke="#3c52a0" strokeWidth={2} />
      </>
    )}
  </svg>
);

interface TreeItemProps {
  row: TreeRow;
  root?: boolean;
  trunk?: string;
  last?: boolean;
}

const TreeItem = ({ row, root = false, trunk = "", last = false }: TreeItemProps) => (
  <li className="flex h-10 items-center pl-1 whitespace-nowrap">
    {root ? (
      <Branch lines={trunk} open={row.open} />
    ) : (
      <>
        <Branch lines={trunk} />
        <Branch lines={last ? "M20.5 0v20M20 19.5h20" : "M20.5 0v40M20 19.5h20"} open={row.open} />
      </>
    )}
    <svg viewBox="0 0 32 32" className="mr-3.5 ml-1 size-8 shrink-0" aria-hidden="true">
      {ICONS[row.icon]}
      {row.shortcut && <Shortcut />}
    </svg>
    <span className={clsx("pt-1", row.icon === "tDrawing" && "font-bold")}>{row.label}</span>
  </li>
);

const SIDE_TABS = ["Prospector", "Settings", "Survey", "Toolbox"];

const Toolspace = () => (
  <aside className="flex shrink-0 pt-3 text-[#f5f5f5]">
    <div className="flex w-[442px] flex-col pb-2.5">
      <h2 className="flex h-[42px] items-center gap-2.5 rounded-tr bg-[#2e3440] pb-0.5 pl-3 text-[22px]">
        <span className="h-5 w-2 bg-[radial-gradient(#dcdcdc_1px,transparent_1px)] bg-[size:4px_4px]" />
        TOOLSPACE
      </h2>
      <div className="flex h-[58px] items-center gap-[22px] pr-2.5 pb-0.5 pl-[11px]">
        <IconButton name="prospector" label="Item view" />
        <span className="flex-1" />
        <IconButton name="treeSwap" label="Preview toggle" />
        <IconButton name="panorama" label="Panorama" />
        <button
          type="button"
          aria-label="Toolspace help"
          className="size-8 rounded-full bg-[#dcdcdc] text-2xl leading-8 font-semibold text-[#555]"
        >
          ?
        </button>
      </div>
      <label className="mx-0.5 flex h-[26px] items-center border border-[#2a313d] bg-[#4f5a6e] pr-1.5 pl-1">
        <select
          aria-label="View"
          className="h-6 min-w-0 flex-1 appearance-none bg-transparent leading-6 outline-none"
        >
          <option>Active Drawing View</option>
        </select>
        <Caret big />
      </label>
      <div className="mt-[3px] flex-1 border border-[#8a8f99] bg-white pt-0.5 text-[22px] text-black">
        <ul>
          <TreeItem row={{ icon: "tDrawing", label: "Drawing1", open: true }} root trunk="M20.5 20v20M20 19.5h20" />
          {DRAWING_ROWS.map((row, i) => (
            <TreeItem key={row.label} row={row} trunk="M20.5 0v40" last={i === DRAWING_ROWS.length - 1} />
          ))}
          <TreeItem
            row={{ icon: "tData", label: "Data Shortcuts []", open: true, shortcut: true }}
            root
            trunk="M20.5 0v20M20 19.5h20"
          />
          {SHORTCUT_ROWS.map((row, i) => (
            <TreeItem key={row.label} row={row} last={i === SHORTCUT_ROWS.length - 1} />
          ))}
        </ul>
      </div>
      <div className="mt-2 h-[93px] border border-[#9a9ea6]" />
      <div className="h-2 rounded-b-lg border-b-2 border-[#2e3440]" />
    </div>
    <div className="flex w-[42px] flex-col pt-[46px] text-[22px]">
      {SIDE_TABS.map((tab, i) => (
        <button
          key={tab}
          type="button"
          className={clsx(
            "flex h-[253px] items-center justify-center rounded-r-lg border-t-2 border-r-2 border-[#262c37] pb-1",
            i === 0 ? "bg-[#3b4453] text-white" : "bg-[#2e3440] text-[#b9bcc2]"
          )}
        >
          <span className="rotate-180 [writing-mode:vertical-rl]">{tab}</span>
        </button>
      ))}
    </div>
  </aside>
);

const ViewCube = () => (
  <div className="absolute top-[77px] right-[33px] size-[260px] font-['Liberation_Sans',sans-serif] text-[42px] leading-none font-bold text-[#a5a7aa]">
    <svg viewBox="0 0 260 260" className="absolute inset-0" aria-hidden="true">
      <circle cx="130" cy="130" r="108" fill="none" stroke="#454b53" strokeWidth="25" />
    </svg>
    <span className="absolute inset-x-0 top-0 text-center">N</span>
    <span className="absolute inset-x-0 -bottom-1 text-center">S</span>
    <span className="absolute inset-y-0 -left-1 flex items-center">W</span>
    <span className="absolute inset-y-0 right-1 flex items-center">E</span>
    <button
      type="button"
      className="absolute inset-[78px] flex items-center justify-center border-2 border-[#8d9194] bg-[#abaeb1]"
    >
      <span className="flex size-16 items-center justify-center bg-[#a1a4ad] font-['Open_Sans',sans-serif] text-2xl text-[#4b5560]">
        TOP
      </span>
    </button>
  </div>
);

const NavBar = () => (
  <div className="absolute top-[455px] right-1 h-[411px] w-[60px] rounded border border-[#72767a] bg-[#5a5f63]">
    <svg
      viewBox="0 0 60 411"
      className="size-full"
      fill="none"
      stroke="#42484f"
      strokeWidth="2"
      aria-label="Navigation bar"
    >
      <circle cx="48" cy="10" r="7" />
      <path d="M44 6l8 8M52 6l-8 8" />
      <path d="M30 30h21v22a22 22 0 1 1-21-22z" fill="#555b66" />
      <circle cx="30" cy="52" r="12" />
      <path d="M21 60l-7 7M38 60l7 7" />
      <path d="M25 90h10l-5 6zM25 231h10l-5 6zM25 307h10l-5 6z" fill="#42484f" stroke="none" />
      <path
        d="M18 156 6 140q0-5 6-3l9 6-4-22q3-5 6 1l5 13-1-19q3-5 6 0l2 19 4-17q4-3 5 2l-1 19 5-9q4-2 4 3l-8 22q-3 4-8 4H25z"
        fill="#555b66"
      />
      <path d="M8 174l28 28M36 174 8 202" />
      <path d="M5 171h9l-9 9zM38 171h-9l9 9zM5 204v-9l9 9z" fill="#42484f" />
      <circle cx="38" cy="203" r="10" fill="#5a5f63" />
      <path d="M45 210l8 6" strokeWidth="5" />
      <path d="M24 290v-32h-5l9-10 10 10h-5v32z" fill="#555b66" />
      <ellipse cx="29" cy="272" rx="23" ry="9" />
      <path d="M9 280l12-8v14z" fill="#42484f" />
      <path d="M6 331h12v12H6zM22 331h12v12H22zM38 331h12v12H38zM6 350h32v26H6z" fill="#555b66" />
      <path d="M16 356l13 7-13 7z" fill="#42484f" />
      <circle cx="48" cy="399" r="7" />
      <path d="M44 397h8" />
    </svg>
  </div>
);

const Canvas = () => (
  <main className="relative flex-1 overflow-hidden bg-[#212830] text-[#f5f5f5]">
    <p className="pt-1.5 pl-1 leading-8">[−][Top][2D Wireframe]</p>
    <div className="absolute top-3.5 right-[17px] flex items-center gap-5">
      <button type="button" aria-label="Minimize drawing">
        <span className="mt-3 block h-1 w-5 bg-white" />
      </button>
      <button type="button" aria-label="Restore drawing">
        <svg viewBox="0 0 20 20" className="size-5" aria-hidden="true">
          <path d="M2 7h11v10H2z" fill="none" stroke="#fff" strokeWidth="4" />
          <path d="M5 2h14v12" fill="none" stroke="#fff" strokeWidth="2" />
        </svg>
      </button>
      <button type="button" aria-label="Close drawing">
        <svg viewBox="0 0 20 20" className="size-5" aria-hidden="true">
          <path d="M2 3l16 14M18 3 2 17" stroke="#fff" strokeWidth="4" />
        </svg>
      </button>
    </div>
    <svg viewBox="0 0 164 164" className="absolute top-[357px] left-[1377px] size-[164px]" aria-hidden="true">
      <path d="M82 0v76M82 88v76M0 82h76M88 82h76M76 76h12v12H76z" fill="none" stroke="#e6e6e6" strokeWidth="1.5" />
      <path d="M82 84v31l7-6 5 12 6-3-5-11h9z" fill="#fff" stroke="#222" />
    </svg>
    <ViewCube />
    <button
      type="button"
      className="absolute top-[381px] right-[117px] flex h-[35px] w-[94px] items-center justify-between rounded-lg bg-[#9ea1ad] px-2 pb-0.5 font-['Liberation_Sans',sans-serif] text-[20px] text-[#4b5058]"
    >
      WCS
      <svg viewBox="0 0 16 9" className="h-[9px] w-4" aria-hidden="true">
        <path d="M0 0h16L8 9z" fill="#b5b8c0" stroke="#868a95" />
      </svg>
    </button>
    <NavBar />
    <div className="absolute bottom-[29px] left-7 h-[144px] w-[144px] text-[35px] leading-none font-light">
      <svg viewBox="0 0 144 144" className="absolute inset-0" aria-hidden="true">
        <path d="M10 33v101h101M1 124h19v19H1z" fill="none" stroke="#fff" strokeWidth="2" />
      </svg>
      <span className="absolute -top-1 left-3.5">Y</span>
      <span className="absolute right-1.5 bottom-2">X</span>
    </div>
  </main>
);

const Grip = () => (
  <div className="mx-auto h-2 w-7 bg-[radial-gradient(#dcdcdc_1px,transparent_1px)] bg-[size:4px_4px]" />
);

const ToolGroup = ({ names }: { names: string[] }) => (
  <div className="flex flex-col">
    {names.map((name) => (
      <IconButton key={name} name={name} label={name} className="h-11" />
    ))}
  </div>
);

const Divider = () => <hr className="mx-0.5 my-0.5 border-t-2 border-white" />;

const RightToolbars = () => (
  <div className="ml-1 flex w-[49px] shrink-0 flex-col">
    <div className="border-2 border-[#262c37] pt-1">
      <Grip />
      <div className="pt-1">
        <ToolGroup names={["r1", "r2", "r3", "r4", "r5", "r6", "r7", "r8", "r9", "r10", "r11", "r12", "r13"]} />
      </div>
      <Divider />
      <ToolGroup names={["r14"]} />
      <Divider />
      <ToolGroup names={["r15", "r16", "r17"]} />
      <Divider />
      <ToolGroup names={["r18", "r19", "r20", "r21", "r22", "r23", "r24"]} />
    </div>
    <div className="border-2 border-[#262c37] pt-1">
      <Grip />
      <ToolGroup names={["r25", "r26", "r27"]} />
    </div>
  </div>
);

const HISTORY = ["AutoCAD menu utilities loaded.*Cancel*", "Command:", "Command:", "Command:"];

const CommandLine = () => (
  <section className="my-2 flex h-[172px] shrink-0 bg-[#2e3440]">
    <div className="flex w-12 flex-col items-center pt-2.5">
      <div className="h-3 w-9 bg-[radial-gradient(#dcdcdc_2px,transparent_2px)] bg-[size:6px_6px]" />
      <IconButton name="close" label="Close command line" size="size-6" className="mt-2.5" />
      <IconButton name="wrench" label="Customize" className="mt-5" />
    </div>
    <div className="flex flex-1 flex-col border-2 border-r-0 border-[#262c37] font-['DejaVu_Sans_Mono',monospace]">
      <ol className="flex-1 bg-[#c8c8c8] pl-1 leading-[31px] text-black">
        {HISTORY.map((line, i) => (
          <li key={i}>{line}</li>
        ))}
      </ol>
      <label className="flex h-[42px] items-center border-t-2 border-[#262c37] bg-white pl-2">
        <svg viewBox="0 0 32 24" className="h-6 w-8 shrink-0" aria-hidden="true">
          <path d="M1 1h30v22H1z" fill="#f4f4f4" stroke="#6a6a6a" strokeWidth="2" />
          <path d="M1 1h30v5H1z" fill="#6a6a6a" />
          <path d="M4 8l6 4-6 4M13 17h7" fill="none" stroke="#444" strokeWidth="2" />
        </svg>
        <svg viewBox="0 0 10 6" preserveAspectRatio="none" className="ml-1 h-2 w-4" aria-hidden="true">
          <path d="M0 0h10L5 6z" fill="#666" />
        </svg>
        <input
          type="text"
          aria-label="Command"
          placeholder="Type a command"
          className="ml-3 flex-1 italic outline-none placeholder:text-[#777]"
        />
      </label>
    </div>
  </section>
);

const StatusGroup = ({ className, children }: { className?: string; children: ReactNode }) => (
  <div className={clsx("flex h-12 items-center bg-[#3b4453]", className)}>{children}</div>
);

const StatusIcon = ({ name, on = false }: { name: string; on?: boolean }) => (
  <IconButton name={name} label={name} className={clsx("h-11", on ? "mx-0.5 w-11 bg-[#5f8dc0]" : "w-12")} />
);

const StatusCaret = () => (
  <span className="flex w-8 justify-center">
    <Caret big />
  </span>
);

const StatusBar = () => (
  <footer className="flex h-[57px] shrink-0 items-start bg-[#222933] text-[#f5f5f5]">
    <div className="flex h-12 flex-1 items-center">
      <IconButton name="burger" label="Layout menu" className="ml-8" />
      <button
        type="button"
        className="ml-[17px] h-12 w-[142px] bg-[#3b4453] font-bold [clip-path:polygon(14%_0,100%_0,86%_100%,0_100%)]"
      >
        Model
      </button>
      <button type="button" className="mr-4 ml-3">Layout1</button>
      <Slash />
      <button type="button" className="mx-4">Layout2</button>
      <Slash />
      <IconButton name="plus" label="New layout" size="size-7" className="mx-5" />
      <Slash />
    </div>
    <div className="flex gap-1.5 pt-1">
      <StatusGroup className="w-[96px] justify-center">
        <button type="button">MODEL</button>
      </StatusGroup>
      <StatusGroup>
        <StatusIcon name="grid" />
        <StatusIcon name="snap" />
        <StatusCaret />
      </StatusGroup>
      <StatusGroup>
        <StatusIcon name="ortho" />
        <StatusIcon name="polar" on />
        <StatusCaret />
        <StatusIcon name="iso" />
        <StatusCaret />
      </StatusGroup>
      <StatusGroup className="-ml-1">
        <StatusIcon name="otrack" on />
        <StatusIcon name="osnap" on />
        <StatusCaret />
      </StatusGroup>
      <StatusGroup>
        <StatusIcon name="annoVis" on />
        <StatusIcon name="annoAuto" />
        <StatusIcon name="anno" />
        <span className="pl-1">1:1000</span>
        <StatusCaret />
      </StatusGroup>
      <StatusGroup>
        <StatusIcon name="gear" />
        <StatusCaret />
      </StatusGroup>
      <StatusGroup className="-ml-1">
        <StatusIcon name="plus" />
      </StatusGroup>
      <StatusGroup>
        <StatusIcon name="isolate" />
      </StatusGroup>
      <StatusGroup className="pr-3">
        <StatusIcon name="stack" />
        <span className="pl-4">3.500</span>
      </StatusGroup>
      <StatusGroup>
        <StatusIcon name="tagFrame" />
        <StatusCaret />
        <StatusIcon name="tag" on />
      </StatusGroup>
      <StatusGroup>
        <StatusIcon name="fullscreen" />
      </StatusGroup>
      <StatusGroup>
        <StatusIcon name="burger" />
      </StatusGroup>
    </div>
  </footer>
);

const App = () => (
  <div className="flex min-h-screen bg-[#3b4453] font-['Open_Sans','Noto_Sans',sans-serif] text-[23px] leading-8">
    <div className="flex min-w-0 flex-1 flex-col">
      <TitleBar />
      <RibbonTabs />
      <Ribbon />
      <FileTabs />
      <div className="flex flex-1 gap-2.5">
        <Toolspace />
        <div className="flex min-w-0 flex-1 flex-col pt-2">
          <div className="flex flex-1">
            <Canvas />
            <RightToolbars />
          </div>
          <CommandLine />
        </div>
      </div>
      <StatusBar />
    </div>
    <div className="w-[3px] shrink-0 border-t-[95px] border-[#0b67c2] bg-[#dcdcdc]" />
  </div>
);

export default App;
